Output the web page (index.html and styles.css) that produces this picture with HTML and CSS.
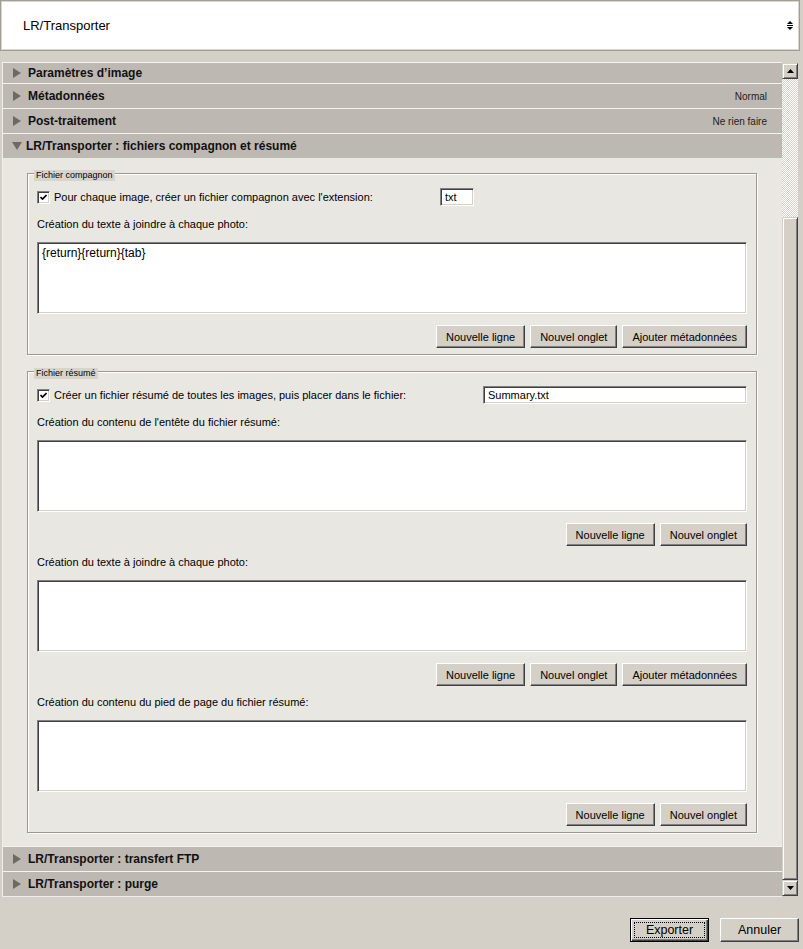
FILE: index.html
```html
<!DOCTYPE html>
<html lang="fr">
<head>
  <meta charset="UTF-8" />
  <title>Exporter</title>
  <link rel="stylesheet" href="styles.css">
</head>
<body>

<div class="topbar">
  <span class="topbar-title">LR/Transporter</span>
  <svg class="updown" width="6" height="9" viewBox="0 0 6 9">
    <polygon points="0,3 3,0 6,3" fill="#000"/>
    <rect x="0" y="4" width="6" height="1" fill="#000"/>
    <polygon points="0,6 6,6 3,9" fill="#000"/>
  </svg>
</div>

<div class="panel">
  <div class="panel-main">

    <div class="section-head first">
      <svg class="tri" width="8" height="10" viewBox="0 0 8 10"><polygon points="0,0 8,5 0,10"/></svg>
      <span>Paramètres d’image</span>
    </div>
    <div class="section-head">
      <svg class="tri" width="8" height="10" viewBox="0 0 8 10"><polygon points="0,0 8,5 0,10"/></svg>
      <span>Métadonnées</span>
      <span class="head-value">Normal</span>
    </div>
    <div class="section-head">
      <svg class="tri" width="8" height="10" viewBox="0 0 8 10"><polygon points="0,0 8,5 0,10"/></svg>
      <span>Post-traitement</span>
      <span class="head-value">Ne rien faire</span>
    </div>
    <div class="section-head">
      <svg class="tri open" width="10" height="8" viewBox="0 0 10 8"><polygon points="0,0 10,0 5,8"/></svg>
      <span>LR/Transporter : fichiers compagnon et résumé</span>
    </div>

    <div class="section-body">

      <div class="group">
        <span class="group-title">Fichier compagnon</span>
        <div class="check-row">
          <span class="check"><svg width="7" height="7" viewBox="0 0 7 7"><polyline points="0.5,3 2.5,5 6.5,1" fill="none" stroke="#000" stroke-width="1.6"/></svg></span>
          <span class="check-label short">Pour chaque image, créer un fichier compagnon avec l'extension:</span>
          <span class="field ext">txt</span>
        </div>
        <div class="label">Création du texte à joindre à chaque photo:</div>
        <div class="memo">{return}{return}{tab}</div>
        <div class="btn-row">
          <button class="btn">Nouvelle ligne</button>
          <button class="btn">Nouvel onglet</button>
          <button class="btn">Ajouter métadonnées</button>
        </div>
      </div>

      <div class="group">
        <span class="group-title">Fichier résumé</span>
        <div class="check-row">
          <span class="check"><svg width="7" height="7" viewBox="0 0 7 7"><polyline points="0.5,3 2.5,5 6.5,1" fill="none" stroke="#000" stroke-width="1.6"/></svg></span>
          <span class="check-label long">Créer un fichier résumé de toutes les images, puis placer dans le fichier:</span>
          <span class="field grow">Summary.txt</span>
        </div>
        <div class="label">Création du contenu de l'entête du fichier résumé:</div>
        <div class="memo"></div>
        <div class="btn-row">
          <button class="btn">Nouvelle ligne</button>
          <button class="btn">Nouvel onglet</button>
        </div>
        <div class="label">Création du texte à joindre à chaque photo:</div>
        <div class="memo"></div>
        <div class="btn-row">
          <button class="btn">Nouvelle ligne</button>
          <button class="btn">Nouvel onglet</button>
          <button class="btn">Ajouter métadonnées</button>
        </div>
        <div class="label">Création du contenu du pied de page du fichier résumé:</div>
        <div class="memo"></div>
        <div class="btn-row">
          <button class="btn">Nouvelle ligne</button>
          <button class="btn">Nouvel onglet</button>
        </div>
      </div>

    </div>

    <div class="section-head">
      <svg class="tri" width="8" height="10" viewBox="0 0 8 10"><polygon points="0,0 8,5 0,10"/></svg>
      <span>LR/Transporter : transfert FTP</span>
    </div>
    <div class="section-head">
      <svg class="tri" width="8" height="10" viewBox="0 0 8 10"><polygon points="0,0 8,5 0,10"/></svg>
      <span>LR/Transporter : purge</span>
    </div>
  </div>

  <div class="scrollbar">
    <div class="sb-btn"><svg width="7" height="4" viewBox="0 0 7 4"><polygon points="0,4 3.5,0 7,4"/></svg></div>
    <div class="sb-track"></div>
    <div class="sb-thumb"></div>
    <div class="sb-btn"><svg width="7" height="4" viewBox="0 0 7 4"><polygon points="0,0 7,0 3.5,4"/></svg></div>
  </div>
</div>

<div class="footer">
  <button class="big default">Exporter</button>
  <button class="big">Annuler</button>
</div>

</body>
</html>
```

FILE: styles.css
```css
* {
  box-sizing: border-box;
}

body {
  margin: 0;
  height: 949px;
  overflow: hidden;
  background: #d4d0c8;
  font-family: 'Liberation Sans', Arial, sans-serif;
  font-size: 11px;
  color: #000;
}

/* barre du haut */
.topbar {
  height: 51px;
  margin-right: 3px;
  display: flex;
  align-items: center;
  justify-content: space-between;
  padding: 0 6px 0 22px;
  background: #fff;
  border: 1px solid #a19d95;
  box-shadow: inset 0 0 0 1px #d9d6d0;
  font-size: 13px;
}

/* panneau des sections */
.panel {
  margin: 11px 0 0 2px;
  width: 796px;
  height: 835px;
  display: flex;
}

.panel-main {
  flex: 1;
  border-left: 1px solid #f0eee9;
  border-bottom: 1px solid #f0eee9;
  display: flex;
  flex-direction: column;
}

.section-head {
  height: 25px;
  flex: none;
  display: flex;
  align-items: center;
  padding: 0 15px 0 10px;
  background: #bdb8b1;
  border-top: 1px solid #f5f3ef;
  font-weight: bold;
  font-size: 12px;
  color: #111;
}

.section-head.first {
  height: 21px;
}

.tri {
  fill: #6d6a66;
  margin-right: 7px;
  flex: none;
}

.tri.open {
  margin-left: -1px;
  margin-right: 4px;
}

.head-value {
  margin-left: auto;
  font-weight: normal;
  font-size: 10px;
  color: #222;
}

.section-body {
  flex: 1;
  background: #e9e7e2;
  padding: 15px 25px 11px 24px;
}

/* groupes */
.group {
  border: 1px solid #9c988f;
  box-shadow: 1px 1px 0 #fff, inset 1px 1px 0 #fff;
  padding: 0 9px 6px 9px;
}

.group + .group {
  margin-top: 16px;
}

.group-title {
  display: block;
  width: fit-content;
  margin: -4px 0 0 -3px;
  padding: 0 2px;
  line-height: 11px;
  font-size: 9px;
  background: #d7d4ce;
}

.check-row {
  display: flex;
  align-items: center;
  height: 18px;
  margin-top: 7px;
}

.check {
  width: 13px;
  height: 13px;
  flex: none;
  margin-right: 4px;
  display: flex;
  align-items: center;
  justify-content: center;
  background: #fff;
  border: 1px solid;
  border-color: #808080 #fff #fff #808080;
  box-shadow: inset 1px 1px 0 #404040, inset -1px -1px 0 #d4d0c8;
}

.check svg {
  display: block;
}

.check-label.short {
  width: 386px;
  flex: none;
}

.check-label.long {
  width: 429px;
  flex: none;
}

.field {
  height: 18px;
  display: flex;
  align-items: center;
  padding: 0 4px;
  background: #fff;
  border: 1px solid;
  border-color: #808080 #fff #fff #808080;
  box-shadow: inset 1px 1px 0 #404040, inset -1px -1px 0 #d4d0c8;
}

.field.ext {
  width: 34px;
}

.field.grow {
  flex: 1;
}

.label {
  line-height: 14px;
  margin-top: 11px;
}

.btn-row + .label {
  margin-top: 9px;
}

.memo {
  height: 72px;
  margin-top: 11px;
  padding: 3px 4px;
  font-size: 12px;
  background: #fff;
  border: 1px solid;
  border-color: #808080 #fff #fff #808080;
  box-shadow: inset 1px 1px 0 #404040, inset -1px -1px 0 #d4d0c8;
}

.btn-row {
  display: flex;
  justify-content: flex-end;
  gap: 5px;
  margin-top: 11px;
}

.btn {
  height: 23px;
  padding: 0 9px;
  font-family: inherit;
  font-size: 11px;
  color: #000;
  background: #d4d0c8;
  border: 1px solid;
  border-color: #fff #404040 #404040 #fff;
  box-shadow: inset -1px -1px 0 #808080;
}

/* barre de défilement */
.scrollbar {
  width: 16px;
  display: flex;
  flex-direction: column;
  padding: 1px 0;
}

.sb-btn {
  height: 16px;
  flex: none;
  display: flex;
  align-items: center;
  justify-content: center;
  background: #d4d0c8;
  border: 1px solid;
  border-color: #d4d0c8 #404040 #404040 #d4d0c8;
  box-shadow: inset 1px 1px 0 #fff, inset -1px -1px 0 #808080;
}

.sb-btn svg {
  fill: #000;
}

.sb-track {
  height: 138px;
  flex: none;
  background-color: #d4d0c8;
  background-image: conic-gradient(#fff 25%, #d4d0c8 0 50%, #fff 0 75%, #d4d0c8 0);
  background-size: 2px 2px;
}

.sb-thumb {
  flex: 1;
  background: #d4d0c8;
  border: 1px solid;
  border-color: #d4d0c8 #404040 #404040 #d4d0c8;
  box-shadow: inset 1px 1px 0 #fff, inset -1px -1px 0 #808080;
}

/* boutons du bas */
.footer {
  display: flex;
  justify-content: flex-end;
  gap: 11px;
  margin-top: 21px;
  padding-right: 4px;
}

.big {
  width: 79px;
  height: 24px;
  font-family: inherit;
  font-size: 12.5px;
  color: #000;
  background: #d4d0c8;
  border: 1px solid;
  border-color: #fff #404040 #404040 #fff;
  box-shadow: inset -1px -1px 0 #808080;
}

.big.default {
  border-color: #000;
  box-shadow: inset 1px 1px 0 #fff, inset -1px -1px 0 #404040, inset -2px -2px 0 #808080;
  outline: 1px dotted #000;
  outline-offset: -5px;
}
```
